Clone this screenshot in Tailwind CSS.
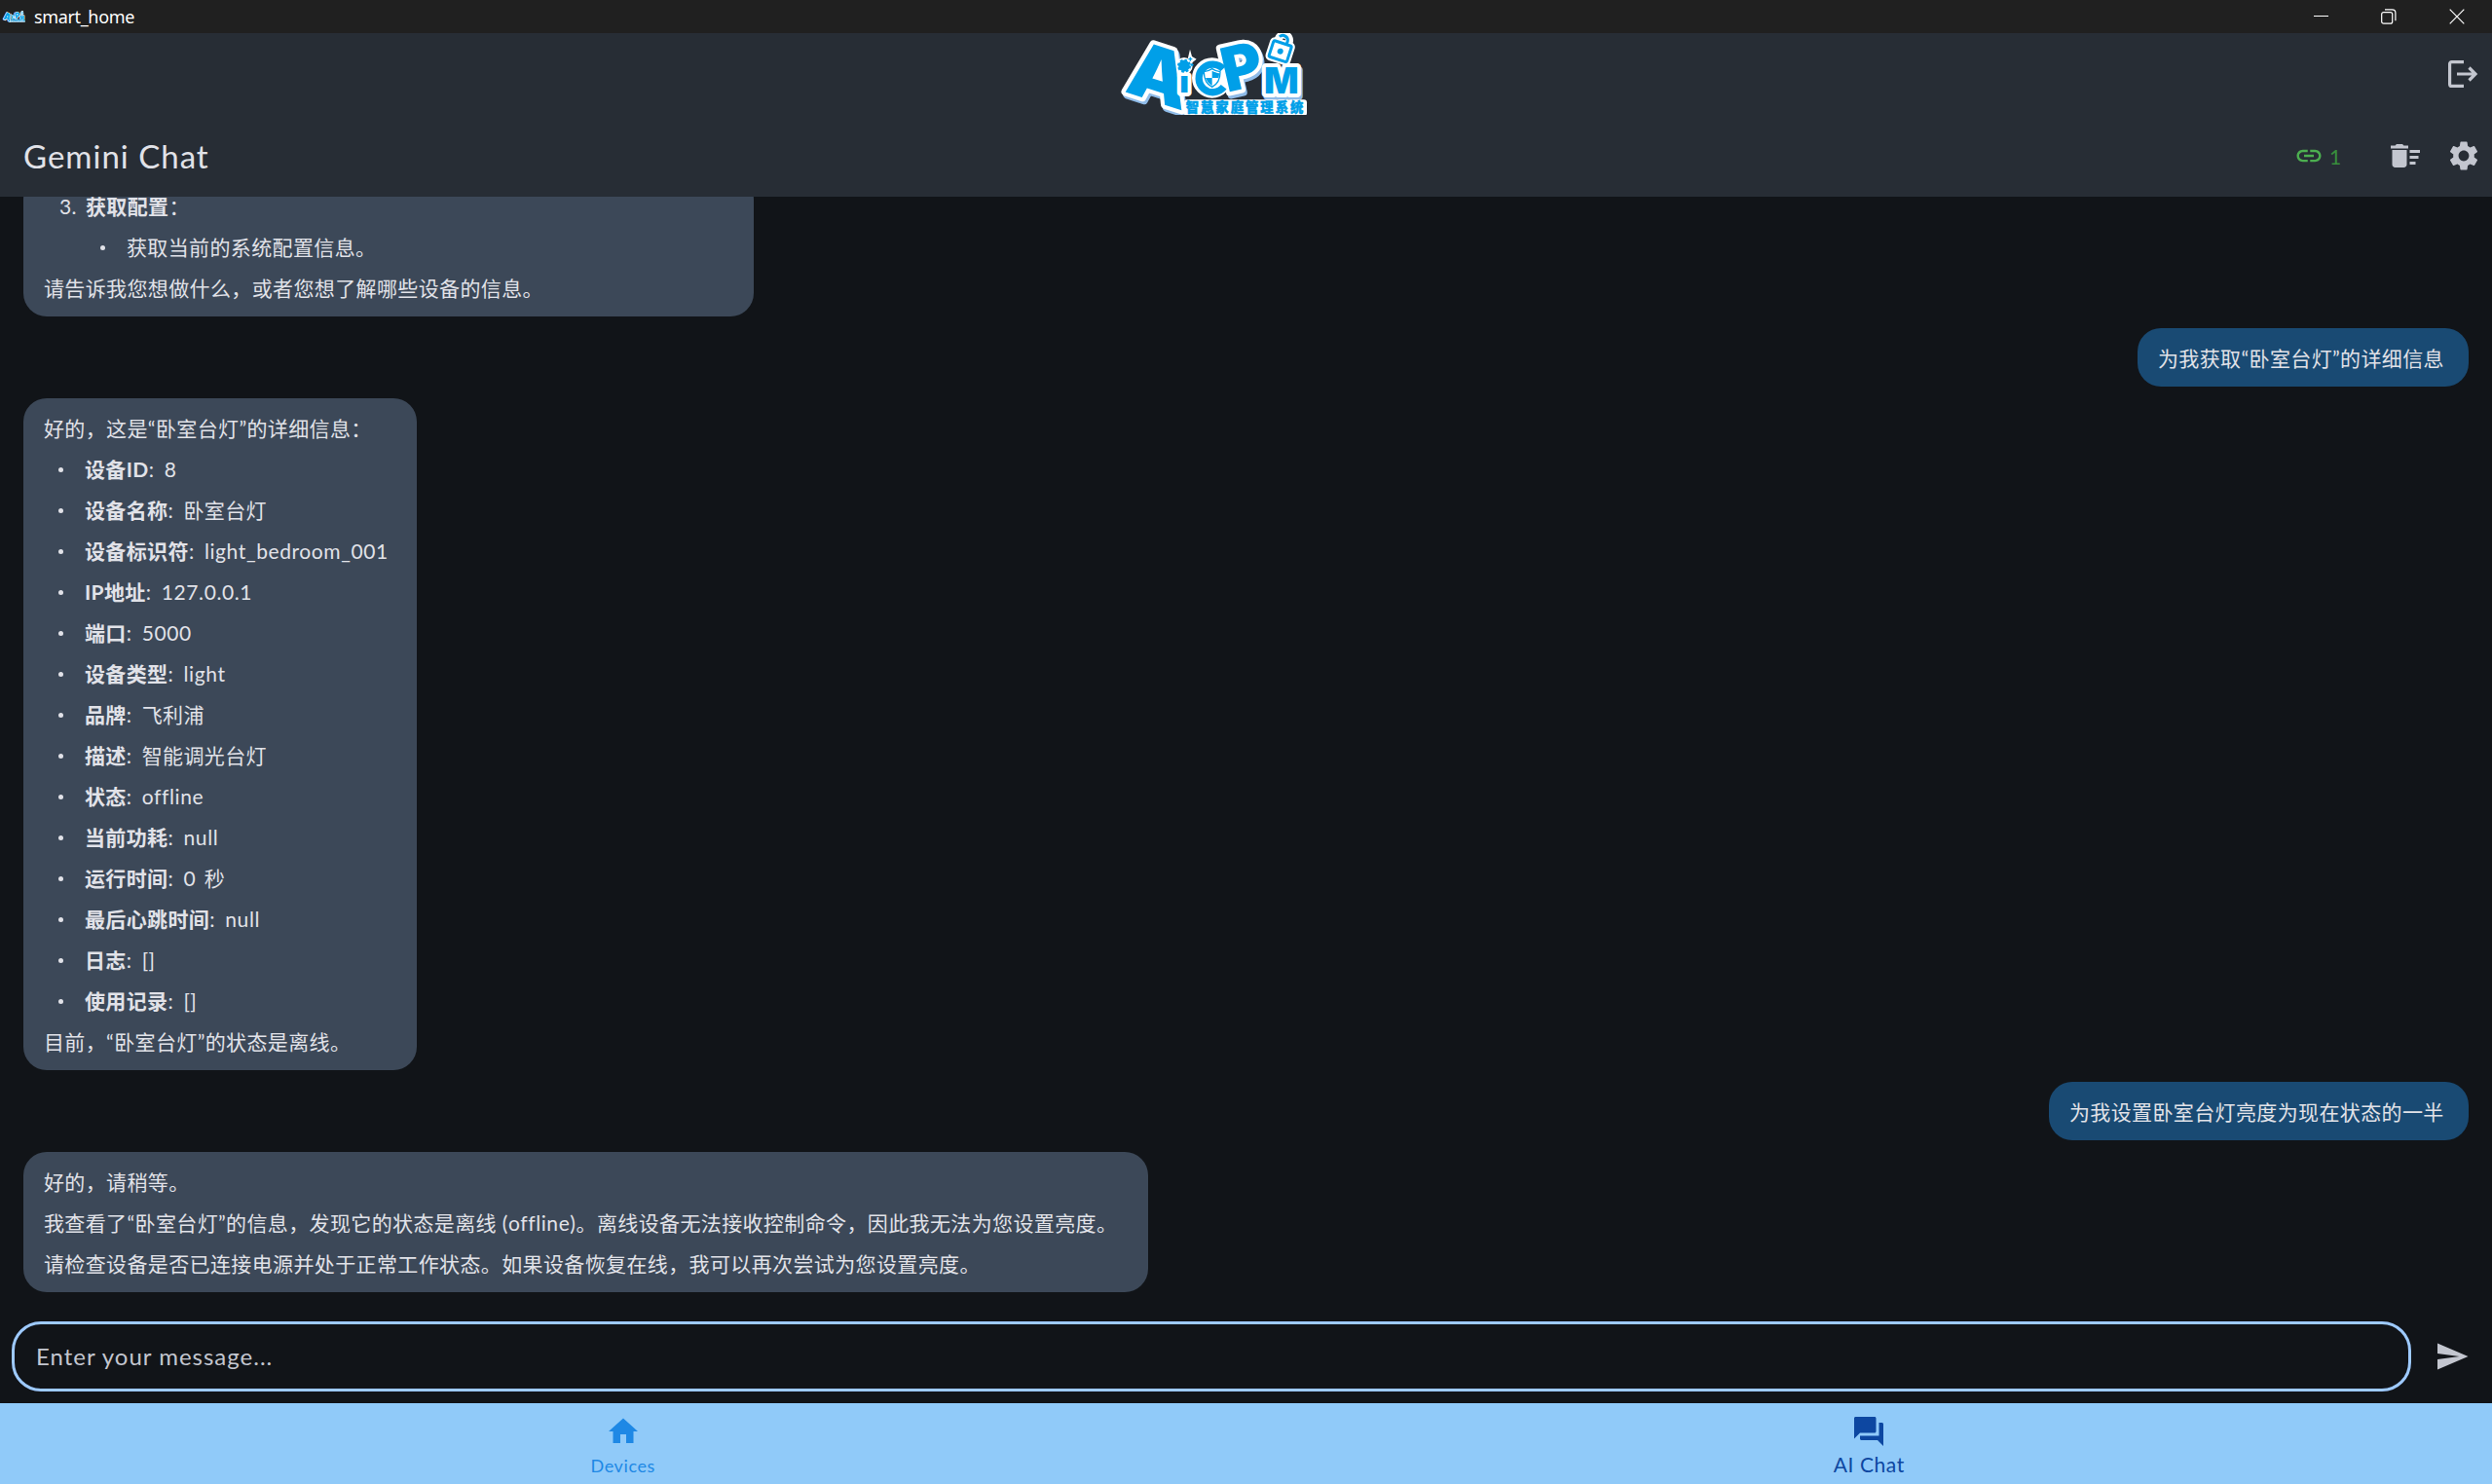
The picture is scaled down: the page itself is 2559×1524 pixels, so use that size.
<!DOCTYPE html>
<html lang="zh-CN">
<head>
<meta charset="utf-8">
<title>smart_home</title>
<script src="https://cdn.jsdelivr.net/npm/@tailwindcss/browser@4"></script>
</head>
<body class="w-[2559px] h-[1524px] overflow-hidden flex flex-col bg-[#111418] text-[#e1e2e8] font-['Lato','Noto_Sans_CJK_SC',sans-serif]">

<!-- window title bar -->
<div class="h-[34px] shrink-0 bg-[#202020] flex items-center text-white">
  <svg class="w-6 h-3 ml-[2px] shrink-0" viewBox="60 38 600 262" preserveAspectRatio="none"><use href="#logo"/></svg>
  <span class="ml-[9px] text-[18px] leading-none font-['Noto_Sans',sans-serif] tracking-[-0.35px]">smart_home</span>
  <div class="ml-auto flex items-center gap-[54px] mr-7">
    <svg class="w-4 h-4" viewBox="0 0 16 16" stroke="#fff" stroke-width="1" fill="none"><path d="M1 7.5h15"/></svg>
    <svg class="w-4 h-4" viewBox="0 0 16 16" stroke="#fff" stroke-width="1.2" fill="none"><rect x=".7" y="3.6" width="11" height="11.6" rx="2"/><path d="M4 .8h7.5a3.4 3.4 0 0 1 3.4 3.4v8"/></svg>
    <svg class="w-4 h-4" viewBox="0 0 16 16" stroke="#fff" stroke-width="1.2" fill="none"><path d="M.7.7l14.6 14.6M15.3.7L.7 15.3"/></svg>
  </div>
</div>

<!-- app header -->
<header class="h-[168px] shrink-0 bg-[#272d35]">
  <div class="h-[84px] flex items-center">
    <div class="flex-1"></div>
    <svg class="w-[259px] h-[84px]" viewBox="60 42 777 252">
      <defs>
        <g id="logo" font-family="'Noto Sans CJK SC', sans-serif" font-weight="900" stroke-linejoin="round">
          <g fill="#8fbbe8" stroke="#8fbbe8" stroke-width="24" transform="translate(5 9)">
            <text font-family="Inter" font-size="226" transform="matrix(1.02 .33 -.20 1 90 222)">A</text>
            <text font-family="Inter" font-size="190" transform="matrix(.97 -.22 .22 .97 408 225)">P</text>
            <text font-family="Inter" font-size="112" transform="translate(522 227)">M</text>
          </g>
          <g fill="#009fe8" stroke="#fff" stroke-width="24" paint-order="stroke">
            <circle cx="362" cy="180" r="50" fill="#fff"/>
            <circle cx="276" cy="143" r="14"/>
            <path d="M294 92l6 22 14 8-12 10-8 22-10-20z" fill="#fff" stroke="none"/>
            <text font-family="Inter" font-size="226" transform="matrix(1.02 .33 -.20 1 90 222)">A</text>
            <text font-family="Inter" font-size="112" transform="translate(522 227)">M</text>
            <text font-family="Inter" font-size="190" transform="matrix(.97 -.22 .22 .97 408 225)">P</text>
            <text font-family="Inter" font-size="94" transform="translate(262 224) scale(1.05 1)">ı</text>
          </g>
          <circle cx="276" cy="143" r="13" fill="none" stroke="#009fe8" stroke-width="9"/>
          <circle cx="276" cy="143" r="18" fill="none" stroke="#009fe8" stroke-width="6" stroke-dasharray="8 6"/>
          <path d="M295 116v12M289 122h12M300 135v10M295 140h10" stroke="#009fe8" stroke-width="4"/>
          <path d="M396 152A43 43 0 1 0 398 208" fill="none" stroke="#009fe8" stroke-width="22"/>
          <path d="M362 152c9 6 17 8 25 9 0 24-8 38-25 47-17-9-25-23-25-47 8-1 16-3 25-9z" fill="#fff" stroke="#009fe8" stroke-width="4"/>
          <path d="M362 158v22h20c2-6 2-10 2-14-8-2-15-4-22-8zM362 180v24c-10-6-16-14-20-24z" fill="#009fe8"/>
          <g transform="rotate(18 572 95)">
            <path d="M556 72V62a17 17 0 0 1 34 0v8" fill="none" stroke="#fff" stroke-width="24"/>
            <rect x="542" y="70" width="62" height="56" rx="6" fill="#fff" stroke="#fff" stroke-width="18"/>
            <path d="M585 70v-8a15 15 0 0 0-28-6" fill="none" stroke="#009fe8" stroke-width="9"/>
            <rect x="544" y="72" width="58" height="52" rx="5" fill="#fff" stroke="#009fe8" stroke-width="9"/>
            <circle cx="573" cy="98" r="9" fill="#009fe8"/>
          </g>
          <rect x="276" y="247" width="378" height="50" rx="9" fill="#fff"/>
          <text x="281" y="286" font-size="40" textLength="362" fill="#009fe8" stroke="#009fe8" stroke-width="1.5">智慧家庭管理系统</text>
        </g>
      </defs>
      <use href="#logo"/>
    </svg>
    <div class="flex-1 flex justify-end pr-3">
      <svg class="w-9 h-9" viewBox="0 0 36 36" fill="none" stroke="#c3c6cf" stroke-width="3.2"><path d="M19 5.6H6.6a2 2 0 0 0-2 2v20.8a2 2 0 0 0 2 2H19M12 18h20M24.5 11.5L31 18l-6.5 6.5"/></svg>
    </div>
  </div>
  <div class="h-[84px] flex items-center pl-6 pr-[11px]">
    <h1 class="text-[33px] leading-none tracking-[1px]">Gemini Chat</h1>
    <svg class="w-[30px] h-[30px] ml-auto" viewBox="0 0 24 24" fill="#4caf50"><path d="M3.9 12c0-1.71 1.39-3.1 3.1-3.1h4V7H7c-2.76 0-5 2.24-5 5s2.24 5 5 5h4v-1.900H7c-1.710 0-3.100-1.390-3.100-3.100zM8 13h8v-2H8v2zm9-6h-4v1.900h4c1.710 0 3.100 1.390 3.100 3.100s-1.390 3.100-3.100 3.100h-4V17h4c2.760 0 5-2.240 5-5s-2.240-5-5-5z"/></svg>
    <span class="ml-[6px] w-[60px] text-[21px] leading-none text-[#388e3c]">1</span>
    <svg class="w-9 h-9" viewBox="0 0 24 24" fill="#c3c6cf"><path d="M15 16h4v2h-4zm0-8h7v2h-7zm0 4h6v2h-6zM3 18c0 1.100.900 2 2 2h6c1.100 0 2-.900 2-2V8H3v10zM14 5h-3l-1-1H6L5 5H2v2h12z"/></svg>
    <svg class="w-9 h-9 ml-6" viewBox="0 0 24 24" fill="#c3c6cf"><path d="M19.140 12.940c.040-.300.060-.610.060-.940 0-.320-.020-.640-.070-.940l2.030-1.580c.180-.140.230-.410.120-.610l-1.920-3.320c-.120-.220-.370-.290-.590-.220l-2.390.960c-.500-.380-1.030-.700-1.620-.940l-.360-2.540c-.040-.240-.240-.410-.480-.410h-3.840c-.240 0-.430.170-.470.410l-.360 2.540c-.590.240-1.130.570-1.620.940l-2.390-.960c-.220-.080-.470 0-.590.220L2.740 8.870c-.120.210-.080.470.120.610l2.030 1.580c-.050.300-.090.630-.090.940s.020.640.070.940l-2.030 1.580c-.180.140-.230.410-.120.610l1.920 3.320c.120.220.370.290.590.220l2.390-.960c.500.380 1.030.700 1.620.940l.360 2.540c.050.240.240.410.480.410h3.840c.240 0 .440-.170.470-.410l.360-2.540c.590-.240 1.130-.560 1.620-.940l2.390.960c.220.080.470 0 .590-.220l1.920-3.320c.120-.220.070-.470-.120-.610l-2.010-1.580zM12 15.600c-1.980 0-3.600-1.620-3.600-3.600s1.620-3.600 3.600-3.600 3.600 1.620 3.600 3.600-1.620 3.600-3.600 3.600z"/></svg>
  </div>
</header>

<!-- conversation -->
<main class="flex-1 min-h-0 overflow-hidden flex flex-col justify-end gap-3 px-6 pb-[18px] text-[21px] leading-[42px] tracking-[0.375px] whitespace-nowrap">
  <section class="w-[750px] shrink-0 rounded-3xl bg-[#3c4858] pt-[10px] pb-2 pl-[21px]">
    <div class="flex pl-4"><span class="w-[27px]">3.</span><span><b>获取配置</b>：</span></div>
    <div class="flex items-center pl-[58px]"><i class="size-[5px] rounded-full bg-[#e1e2e8] mr-[22px]"></i>获取当前的系统配置信息。</div>
    <p>请告诉我您想做什么，或者您想了解哪些设备的信息。</p>
  </section>

  <section class="w-[340px] h-[60px] shrink-0 self-end rounded-3xl bg-[#194a73] pt-[10px] pl-[21px]"><p>为我获取“卧室台灯”的详细信息</p></section>

  <section class="w-[404px] shrink-0 rounded-3xl bg-[#3c4858] pt-[10px] pb-2 pl-[21px]">
    <p>好的，这是“卧室台灯”的详细信息：</p>
    <ul>
      <li class="flex items-center pl-[15px]"><i class="size-[5px] rounded-full bg-[#e1e2e8] mr-[22px]"></i><b>设备ID</b><span class="w-4">:</span><span class="tracking-[0.6px]">8</span></li>
      <li class="flex items-center pl-[15px]"><i class="size-[5px] rounded-full bg-[#e1e2e8] mr-[22px]"></i><b>设备名称</b><span class="w-4">:</span><span>卧室台灯</span></li>
      <li class="flex items-center pl-[15px]"><i class="size-[5px] rounded-full bg-[#e1e2e8] mr-[22px]"></i><b>设备标识符</b><span class="w-4">:</span><span class="tracking-[0.6px]">light_bedroom_001</span></li>
      <li class="flex items-center pl-[15px]"><i class="size-[5px] rounded-full bg-[#e1e2e8] mr-[22px]"></i><b>IP地址</b><span class="w-4">:</span><span class="tracking-[0.6px]">127.0.0.1</span></li>
      <li class="flex items-center pl-[15px]"><i class="size-[5px] rounded-full bg-[#e1e2e8] mr-[22px]"></i><b>端口</b><span class="w-4">:</span><span class="tracking-[0.6px]">5000</span></li>
      <li class="flex items-center pl-[15px]"><i class="size-[5px] rounded-full bg-[#e1e2e8] mr-[22px]"></i><b>设备类型</b><span class="w-4">:</span><span class="tracking-[0.6px]">light</span></li>
      <li class="flex items-center pl-[15px]"><i class="size-[5px] rounded-full bg-[#e1e2e8] mr-[22px]"></i><b>品牌</b><span class="w-4">:</span><span>飞利浦</span></li>
      <li class="flex items-center pl-[15px]"><i class="size-[5px] rounded-full bg-[#e1e2e8] mr-[22px]"></i><b>描述</b><span class="w-4">:</span><span>智能调光台灯</span></li>
      <li class="flex items-center pl-[15px]"><i class="size-[5px] rounded-full bg-[#e1e2e8] mr-[22px]"></i><b>状态</b><span class="w-4">:</span><span class="tracking-[0.6px]">offline</span></li>
      <li class="flex items-center pl-[15px]"><i class="size-[5px] rounded-full bg-[#e1e2e8] mr-[22px]"></i><b>当前功耗</b><span class="w-4">:</span><span class="tracking-[0.6px]">null</span></li>
      <li class="flex items-center pl-[15px]"><i class="size-[5px] rounded-full bg-[#e1e2e8] mr-[22px]"></i><b>运行时间</b><span class="w-4">:</span><span class="[word-spacing:3px]">0 秒</span></li>
      <li class="flex items-center pl-[15px]"><i class="size-[5px] rounded-full bg-[#e1e2e8] mr-[22px]"></i><b>最后心跳时间</b><span class="w-4">:</span><span class="tracking-[0.6px]">null</span></li>
      <li class="flex items-center pl-[15px]"><i class="size-[5px] rounded-full bg-[#e1e2e8] mr-[22px]"></i><b>日志</b><span class="w-4">:</span><span>[]</span></li>
      <li class="flex items-center pl-[15px]"><i class="size-[5px] rounded-full bg-[#e1e2e8] mr-[22px]"></i><b>使用记录</b><span class="w-4">:</span><span>[]</span></li>
    </ul>
    <p>目前，“卧室台灯”的状态是离线。</p>
  </section>

  <section class="w-[431px] h-[60px] shrink-0 self-end rounded-3xl bg-[#194a73] pt-[10px] pl-[21px]"><p>为我设置卧室台灯亮度为现在状态的一半</p></section>

  <section class="w-[1155px] shrink-0 rounded-3xl bg-[#3c4858] pt-[10px] pb-2 pl-[21px]">
    <p>好的，请稍等。</p>
    <p>我查看了“卧室台灯”的信息，发现它的状态是离线 <span class="tracking-[0.6px]">(offline)</span>。离线设备无法接收控制命令，因此我无法为您设置亮度。</p>
    <p>请检查设备是否已连接电源并处于正常工作状态。如果设备恢复在线，我可以再次尝试为您设置亮度。</p>
  </section>
</main>

<!-- composer -->
<div class="h-24 shrink-0 flex items-center pl-3">
  <div class="w-[2464px] h-[72px] rounded-[30px] border-3 border-[#9ecaff] flex items-center pl-[22px] text-[24px] leading-none text-[#c3c6cf] tracking-[1px]">Enter your message...</div>
  <svg class="w-9 h-9 ml-6" viewBox="0 0 24 24" fill="#c3c6cf"><path d="M2.010 21L23 12 2.010 3 2 10l15 2-15 2z"/></svg>
</div>

<!-- bottom navigation -->
<nav class="h-[83px] shrink-0 bg-[#90caf9] flex leading-none">
  <a class="flex-1 flex flex-col items-center pt-[11px] text-[#1e88e5]">
    <svg class="w-9 h-9" viewBox="0 0 24 24" fill="currentColor"><path d="M10 20v-6h4v6h5v-8h3L12 3 2 12h3v8z"/></svg>
    <span class="mt-[8px] text-[18px] tracking-[0.6px]">Devices</span>
  </a>
  <a class="flex-1 flex flex-col items-center pt-[11px] text-[#0d47a1]">
    <svg class="w-9 h-9" viewBox="0 0 24 24" fill="currentColor"><path d="M21 6h-2v9H6v2c0 .550.450 1 1 1h11l4 4V7c0-.550-.450-1-1-1zm-4 6V3c0-.550-.450-1-1-1H3c-.550 0-1 .450-1 1v14l4-4h10c.550 0 1-.450 1-1z"/></svg>
    <span class="mt-[5px] text-[21px] tracking-[0.6px]">AI Chat</span>
  </a>
</nav>
</body>
</html>
